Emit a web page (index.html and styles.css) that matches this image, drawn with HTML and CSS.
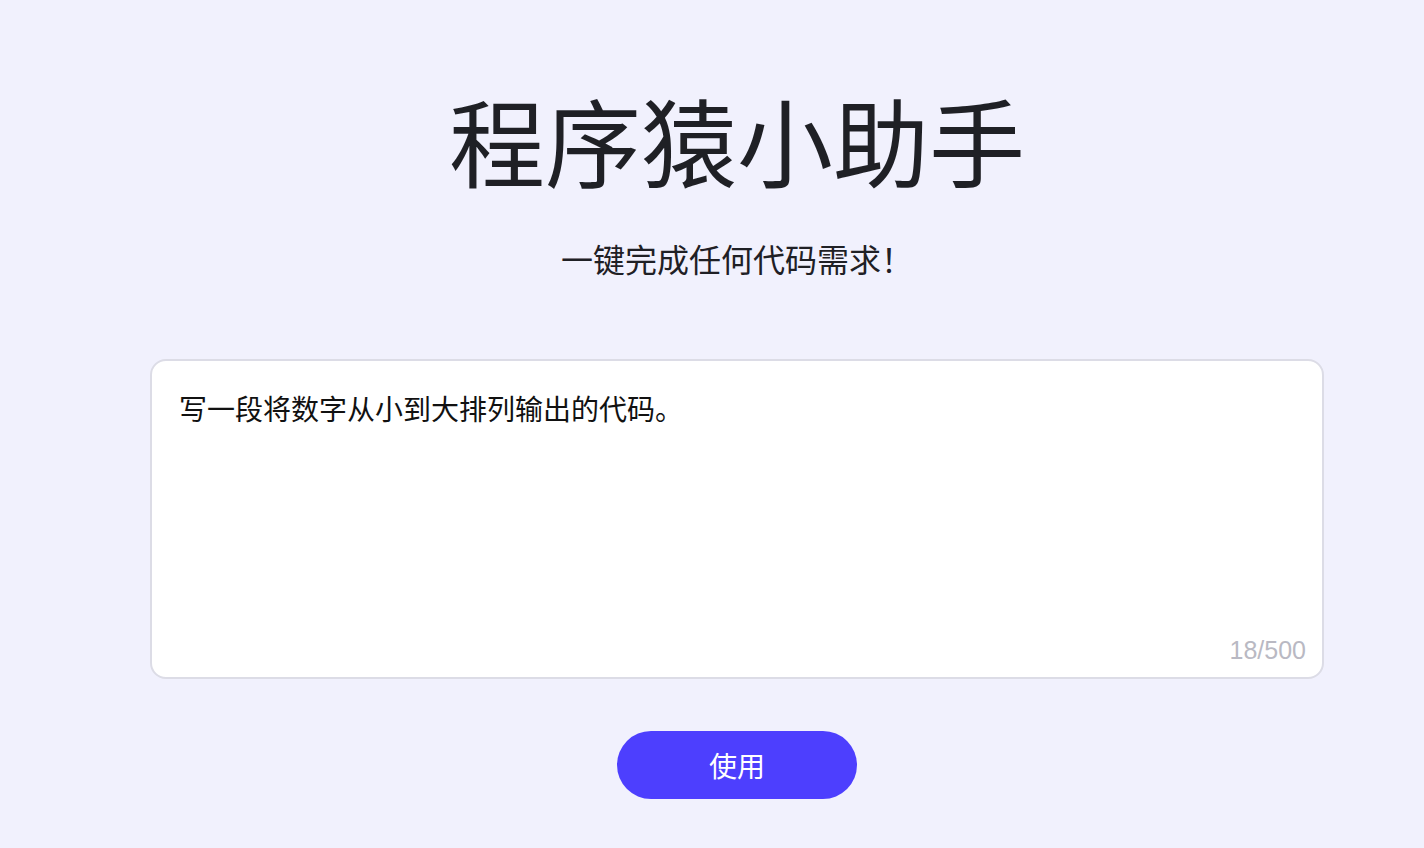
FILE: index.html
```html
<!DOCTYPE html>
<html lang="zh-CN">
<head>
  <meta charset="UTF-8" />
  <meta name="viewport" content="width=device-width, initial-scale=1.0"/>
  <title>程序猿小助手</title>
  <link rel="stylesheet" href="styles.css">
</head>
<body>
  <main class="page">
    <h1 class="title">程序猿小助手</h1>
    <p class="subtitle">一键完成任何代码需求！</p>

    <div class="prompt-box">
      <textarea class="prompt" maxlength="500">写一段将数字从小到大排列输出的代码。</textarea>
      <span class="counter">18/500</span>
    </div>

    <button class="use-btn">使用</button>
  </main>
</body>
</html>
```

FILE: styles.css
```css
body {
  margin: 0;
  background: #f1f1fd;
  color: #1f2025;
  font-family: "Liberation Sans", "Noto Sans CJK SC", sans-serif;
  height: 100vh;
  overflow: hidden;
}

.page {
  display: flex;
  flex-direction: column;
  align-items: center;
  padding: 0 100px 0 150px;
}

.title {
  font-family: "Noto Sans CJK SC", sans-serif;
  font-size: 96px;
  font-weight: 400;
  line-height: 1;
  margin: 91px 0 0;
}

.subtitle {
  font-family: "Noto Sans CJK SC", sans-serif;
  font-size: 32px;
  line-height: 1;
  margin: 55px 0 0;
}

.prompt-box {
  position: relative;
  align-self: stretch;
  height: 320px;
  margin-top: 85px;
  background: #fff;
  border: 2px solid #dcdce6;
  border-radius: 16px;
  box-sizing: border-box;
}

.prompt {
  width: 100%;
  height: 100%;
  box-sizing: border-box;
  padding: 27px 27px;
  border: 0;
  outline: none;
  resize: none;
  background: transparent;
  font-family: "Noto Sans CJK SC", sans-serif;
  font-size: 28px;
  line-height: 40px;
  color: #111;
}

.counter {
  position: absolute;
  right: 16px;
  bottom: 12px;
  font-size: 25px;
  color: #b9b9c3;
}

.use-btn {
  margin-top: 52px;
  width: 240px;
  height: 68px;
  border: 0;
  border-radius: 34px;
  background: #4d3ffe;
  color: #fff;
  font-family: "Noto Sans CJK SC", sans-serif;
  font-size: 28px;
  cursor: pointer;
}
```
